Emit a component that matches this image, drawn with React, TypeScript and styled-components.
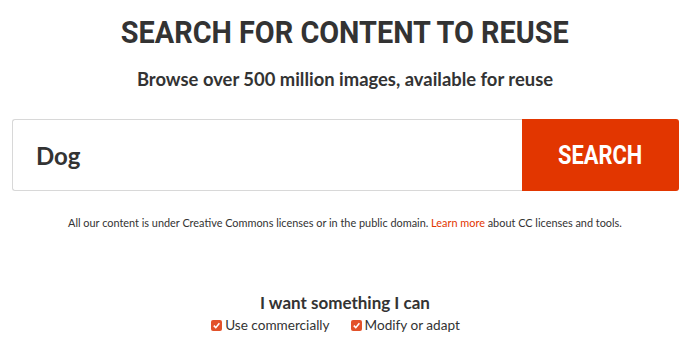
import React, { useState } from "react";
import styled, { createGlobalStyle } from "styled-components";

const GlobalStyle = createGlobalStyle`
  html, body {
    margin: 0;
    padding: 0;
    background: #ffffff;
  }
  body {
    font-family: "Lato", "Open Sans", sans-serif;
    color: #333333;
  }
`;

const Page = styled.div`
  width: 690px;
  height: 353px;
  overflow: hidden;
  display: flex;
  flex-direction: column;
  align-items: center;
  padding-top: 15px;
  box-sizing: border-box;
`;

const Title = styled.h1`
  margin: 0;
  font-family: "Roboto", sans-serif;
  font-weight: 700;
  font-size: 31px;
  line-height: 36px;
  color: #333333;
  transform: scaleX(0.93);
`;

const Subtitle = styled.h2`
  margin: 17px 0 0;
  font-family: "Lato", sans-serif;
  font-weight: 700;
  font-size: 18.4px;
  line-height: 22px;
  color: #333333;
`;

const SearchForm = styled.form`
  margin-top: 29px;
  width: 667px;
  height: 72px;
  display: flex;
  align-self: flex-start;
  margin-left: 12px;
`;

const SearchInput = styled.input`
  flex: 1;
  min-width: 0;
  border: 1px solid #d8d8d8;
  border-right: none;
  border-radius: 3px 0 0 3px;
  padding: 0 23px;
  font-family: "Lato", sans-serif;
  font-weight: 700;
  font-size: 24px;
  color: #333333;
  outline: none;
`;

const SearchButton = styled.button`
  width: 157px;
  border: none;
  border-radius: 0 3px 3px 0;
  background: #e23600;
  cursor: pointer;
`;

const ButtonLabel = styled.span`
  display: inline-block;
  color: #ffffff;
  font-family: "Roboto", sans-serif;
  font-weight: 700;
  font-size: 25px;
  transform: scaleX(0.875);
`;

const Notice = styled.p`
  margin: 25px 0 0;
  font-family: "Lato", sans-serif;
  font-size: 10.9px;
  color: #333333;
`;

const Link = styled.a`
  color: #e23600;
  text-decoration: none;
`;

const FilterTitle = styled.h3`
  margin: 63px 0 0;
  font-family: "Lato", sans-serif;
  font-weight: 700;
  font-size: 17px;
  line-height: 22px;
  color: #333333;
`;

const Options = styled.div`
  display: flex;
  gap: 21px;
  margin-top: 3px;
  margin-right: 19px;
`;

const Option = styled.label`
  display: flex;
  align-items: center;
  gap: 3px;
  font-family: "Lato", sans-serif;
  font-size: 13.6px;
  color: #333333;
  cursor: pointer;
`;

const Box = styled.span<{ $on: boolean }>`
  width: 11px;
  height: 11px;
  border-radius: 2px;
  background: ${(p) => (p.$on ? "#e2522a" : "#ffffff")};
  border: ${(p) => (p.$on ? "none" : "1px solid #999")};
  display: flex;
  align-items: center;
  justify-content: center;
`;

const Check = () => (
  <svg width="9" height="9" viewBox="0 0 10 10">
    <path d="M2 5.2 L4.2 7.4 L8.2 2.6" fill="none" stroke="#fff" strokeWidth="1.8" />
  </svg>
);

const CheckOption = (params: { label: string }) => {
  const [on, setOn] = useState(true);
  return (
    <Option onClick={() => setOn(!on)}>
      <Box $on={on}>{on && <Check />}</Box>
      {params.label}
    </Option>
  );
};

const App = () => {
  const [query, setQuery] = useState("Dog");

  return (
    <>
      <GlobalStyle />
      <Page>
        <Title>SEARCH FOR CONTENT TO REUSE</Title>
        <Subtitle>Browse over 500 million images, available for reuse</Subtitle>
        <SearchForm onSubmit={(e) => e.preventDefault()}>
          <SearchInput value={query} onChange={(e) => setQuery(e.target.value)} />
          <SearchButton type="submit">
            <ButtonLabel>SEARCH</ButtonLabel>
          </SearchButton>
        </SearchForm>
        <Notice>
          All our content is under Creative Commons licenses or in the public domain.{" "}
          <Link href="#">Learn more</Link> about CC licenses and tools.
        </Notice>
        <FilterTitle>I want something I can</FilterTitle>
        <Options>
          <CheckOption label="Use commercially" />
          <CheckOption label="Modify or adapt" />
        </Options>
      </Page>
    </>
  );
};

export default App;
